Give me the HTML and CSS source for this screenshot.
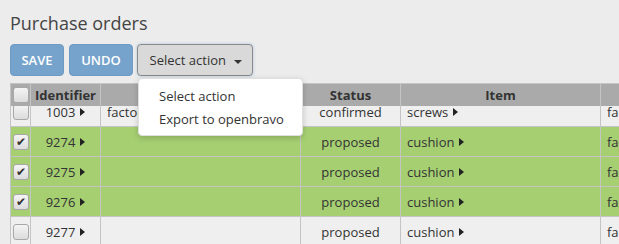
FILE: index.html
```html
<!DOCTYPE html>
<html>
<head>
  <title>Purchase orders</title>
  <link rel="stylesheet" href="styles.css">
</head>
<body>
  <div class="page">
    <h1 class="title">Purchase orders</h1>
    <div class="toolbar">
      <button class="btn btn-primary">SAVE</button>
      <button class="btn btn-primary btn-undo">UNDO</button>
      <div class="dropdown">
        <button class="btn btn-select">Select action <span class="caret"></span></button>
        <ul class="dropdown-menu">
          <li>Select action</li>
          <li>Export to openbravo</li>
        </ul>
      </div>
    </div>

    <div class="grid">
      <div class="grid-row grid-head">
        <div class="cell col-check"><span class="check"></span></div>
        <div class="cell col-id">Identifier</div>
        <div class="cell col-supplier"></div>
        <div class="cell col-status">Status</div>
        <div class="cell col-item">Item</div>
        <div class="cell col-rest"></div>
      </div>
      <div class="grid-body">
        <div class="grid-scroll">
          <div class="grid-row">
            <div class="cell col-check"><span class="check"></span></div>
            <div class="cell col-id">1003 <span class="arrow"></span></div>
            <div class="cell col-supplier">factory</div>
            <div class="cell col-status">confirmed</div>
            <div class="cell col-item">screws <span class="arrow"></span></div>
            <div class="cell col-rest">factory</div>
          </div>
          <div class="grid-row selected">
            <div class="cell col-check"><span class="check checked"></span></div>
            <div class="cell col-id">9274 <span class="arrow"></span></div>
            <div class="cell col-supplier"></div>
            <div class="cell col-status">proposed</div>
            <div class="cell col-item">cushion <span class="arrow"></span></div>
            <div class="cell col-rest">factory</div>
          </div>
          <div class="grid-row selected">
            <div class="cell col-check"><span class="check checked"></span></div>
            <div class="cell col-id">9275 <span class="arrow"></span></div>
            <div class="cell col-supplier"></div>
            <div class="cell col-status">proposed</div>
            <div class="cell col-item">cushion <span class="arrow"></span></div>
            <div class="cell col-rest">factory</div>
          </div>
          <div class="grid-row selected">
            <div class="cell col-check"><span class="check checked"></span></div>
            <div class="cell col-id">9276 <span class="arrow"></span></div>
            <div class="cell col-supplier"></div>
            <div class="cell col-status">proposed</div>
            <div class="cell col-item">cushion <span class="arrow"></span></div>
            <div class="cell col-rest">factory</div>
          </div>
          <div class="grid-row">
            <div class="cell col-check"><span class="check"></span></div>
            <div class="cell col-id">9277 <span class="arrow"></span></div>
            <div class="cell col-supplier"></div>
            <div class="cell col-status">proposed</div>
            <div class="cell col-item">cushion <span class="arrow"></span></div>
            <div class="cell col-rest">factory</div>
          </div>
        </div>
      </div>
    </div>
  </div>
</body>
</html>
```

FILE: styles.css
```css
body {
  margin: 0;
  background-color: #ececec;
  font-family: "Open Sans", Arial, sans-serif;
  color: #333;
  overflow: hidden;
}

.page {
  padding: 0 0 0 10px;
}

.title {
  margin: 0;
  padding-top: 11px;
  font-size: 18px;
  font-weight: normal;
  line-height: 25px;
  color: #444;
}

.toolbar {
  display: flex;
  gap: 5px;
  margin-top: 8px;
  height: 32px;
}

.btn {
  font-family: inherit;
  height: 32px;
  border-radius: 4px;
  font-size: 13px;
  cursor: pointer;
}

.btn-primary {
  background-color: #76a3cb;
  border: 1px solid #6d9bc4;
  color: #fff;
  font-weight: 600;
  width: 54px;
  padding: 0;
}

.btn-undo {
  width: 64px;
}

.dropdown {
  position: relative;
  margin-left: -1px;
}

.btn-select {
  background-color: #d9d9d9;
  border: 1px solid #8a8a8a;
  color: #333;
  width: 116px;
  padding: 0 0 0 2px;
  box-shadow: 0 0 3px rgba(102, 153, 204, 0.5);
}

.caret {
  display: inline-block;
  width: 0;
  height: 0;
  margin-left: 5px;
  vertical-align: middle;
  border-top: 4px solid #333;
  border-left: 4px solid transparent;
  border-right: 4px solid transparent;
}

.dropdown-menu {
  position: absolute;
  top: 34px;
  left: 1px;
  z-index: 10;
  width: 165px;
  margin: 0;
  padding: 6px 0;
  list-style: none;
  background-color: #fff;
  border: 1px solid #e0e0e0;
  border-radius: 4px;
  box-shadow: 0 2px 6px rgba(0, 0, 0, 0.18);
  box-sizing: border-box;
  height: 58px;
}

.dropdown-menu li {
  padding: 0 20px;
  font-size: 13px;
  line-height: 23px;
  color: #333;
  white-space: nowrap;
}

.grid {
  margin-top: 7px;
  width: 800px;
  border-top: 1px solid #c4c4c4;
  border-left: 1px solid #c4c4c4;
}

.grid-row {
  display: flex;
  height: 30px;
  background-color: #efefef;
  border-bottom: 1px solid #c4c4c4;
  box-sizing: border-box;
}

.grid-row.selected {
  background-color: #a6cf72;
}

.grid-head {
  height: 22px;
  background-color: #aaaaaa;
  font-weight: bold;
  border-bottom: none;
}

.grid-head .col-item {
  justify-content: center;
}

.grid-body {
  height: 200px;
  overflow: hidden;
}

.grid-scroll {
  margin-top: -9px;
}

.cell {
  display: flex;
  align-items: center;
  font-size: 13px;
  border-right: 1px solid #c4c4c4;
  box-sizing: border-box;
  padding: 0 6px;
  white-space: nowrap;
  overflow: hidden;
}

.col-check {
  width: 20px;
  padding: 0;
  justify-content: center;
}

.col-id {
  width: 70px;
  justify-content: center;
}

.col-supplier {
  width: 200px;
}

.col-status {
  width: 100px;
  justify-content: center;
}

.col-item {
  width: 200px;
}

.col-rest {
  width: 200px;
}

.arrow {
  display: inline-block;
  width: 0;
  height: 0;
  margin-left: 5px;
  border-left: 5px solid #222;
  border-top: 4px solid transparent;
  border-bottom: 4px solid transparent;
}

.check {
  display: block;
  width: 16px;
  height: 16px;
  box-sizing: border-box;
  border: 1px solid #a8a8a8;
  border-radius: 3px;
  background: linear-gradient(#f4f4f4, #dcdcdc);
  position: relative;
}

.check.checked::after {
  content: "\2714";
  position: absolute;
  left: 2px;
  top: -2px;
  font-size: 12px;
  color: #333;
}
```
